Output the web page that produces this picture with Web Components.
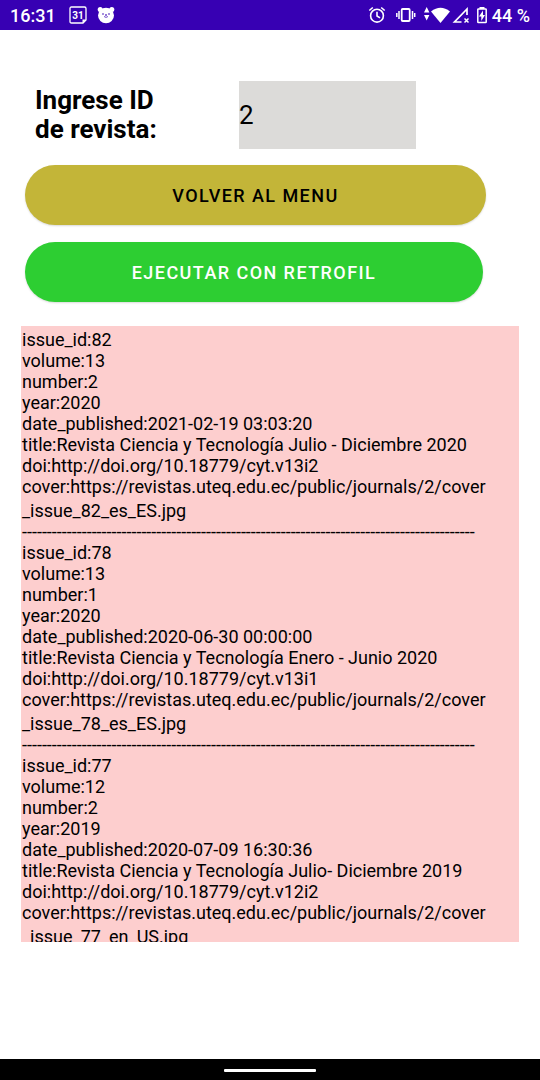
<!DOCTYPE html>
<html lang="es">
<head>
<meta charset="utf-8">
<meta name="viewport" content="width=device-width, initial-scale=1">
<title>Revistas</title>
<style>
  body { margin: 0; background: #fff; color: #000; font-family: Roboto, sans-serif; }
</style>
</head>
<body>
<revista-app></revista-app>
<script>
class BaseElement extends HTMLElement {
  constructor() {
    super();
    this.attachShadow({ mode: 'open' }).innerHTML = this.render();
  }
  render() { return ''; }
}

customElements.define('status-bar', class extends BaseElement {
  render() {
    return `
    <style>
      :host { display: flex; justify-content: space-between; align-items: center; height: 30px; padding: 0 10px;
              box-sizing: border-box; background: #3700b3; color: #fff; font-size: 18px; font-weight: 500; line-height: 21px; }
      .group { display: flex; align-items: center; }
      .left { gap: 10px; }
      .left span { margin-right: 3px; }
      .right span { margin-left: 4px; }
      .battery { margin-left: 6px; }
      svg { display: block; fill: none; stroke: #fff; }
      text { fill: #fff; stroke: none; font: 700 10px Roboto, sans-serif; }
    </style>
    <div class="group left">
      <span>16:31</span>
      <svg width="18" height="18" viewBox="0 0 18 18" aria-hidden="true">
        <path d="M2.500 1h13q1.500 0 1.500 1.500v11.500l-3 3H2.500q-1.500 0-1.500-1.500V2.500Q1 1 2.500 1z" stroke-width="1.300"/>
        <path d="M13.500 17v-3.500H17z" fill="#fff" stroke="none"/>
        <text x="9" y="12.500" text-anchor="middle">31</text>
      </svg>
      <svg width="18" height="18" viewBox="0 0 18 18" aria-hidden="true">
        <g fill="#fff" stroke="none"><circle cx="3.200" cy="3.500" r="2.500"/><circle cx="14.800" cy="3.500" r="2.500"/><ellipse cx="9" cy="9.500" rx="8" ry="7.700"/></g>
        <g fill="#3700b3" stroke="none"><circle cx="6" cy="8" r=".8"/><circle cx="12" cy="8" r=".8"/><ellipse cx="9" cy="9" rx="1" ry=".7"/></g>
        <path d="M7 10.500q2 1.800 4 0" stroke="#3700b3" stroke-width=".7"/>
      </svg>
    </div>
    <div class="group right">
      <svg width="18" height="18" viewBox="0 0 18 18" aria-hidden="true">
        <circle cx="9" cy="9.700" r="6.400" stroke-width="1.600"/>
        <path d="M9 5.800v4.200l3 1.900M1.300 4.500l3.500-3M16.700 4.500l-3.500-3" stroke-width="1.600"/>
      </svg>
      <svg width="38" height="18" viewBox="0 0 38 18" aria-hidden="true">
        <rect x="15.700" y="3" width="8" height="12" rx="1" stroke-width="1.800"/>
        <path d="M13 5v8M10.800 7v4M26.500 5v8M28.700 7v4" stroke-width="1.500"/>
      </svg>
      <svg width="46" height="18" viewBox="0 0 46 18" aria-hidden="true">
        <g fill="#fff" stroke="none">
          <path d="M0 6.500L2.700 1 5.400 6.500zM0 9l2.700 5.500L5.400 9z"/>
          <path d="M7 5.500Q16.500-2 26 5.500L16.500 17z"/>
        </g>
        <path d="M43 9V3L30.500 16h7" stroke-width="1.700"/>
        <path d="M40.500 12.500l4 4M44.500 12.500l-4 4" stroke-width="1.500"/>
      </svg>
      <svg class="battery" width="12" height="18" viewBox="0 0 12 18" aria-hidden="true">
        <path d="M3.500 1h5v2h-5z" fill="#fff" stroke="none"/>
        <rect x="1.800" y="3" width="8.400" height="13.500" rx=".6" stroke-width="1.500"/>
        <path d="M7 4.500l-4 6h2.300V15l3.700-6H7z" fill="#fff" stroke="none"/>
      </svg>
      <span>44 %</span>
    </div>`;
  }
});

customElements.define('id-field', class extends BaseElement {
  render() {
    return `
    <style>
      :host { display: flex; align-items: center; gap: 60px; padding: 0 14px; }
      label { flex: 0 0 144px; font-size: 26px; font-weight: 700; line-height: 29px; }
      input { flex: 0 1 177px; min-width: 0; height: 68px; box-sizing: border-box; border: 0; border-radius: 0; padding: 0; margin: 0;
              background: #dcdbd9; color: #000; font: 400 26px/29px Roboto, sans-serif; outline: none; }
    </style>
    <label for="id">Ingrese ID<br>de revista:</label>
    <input id="id" type="text" inputmode="numeric" value="2">`;
  }
});

customElements.define('pill-button', class extends BaseElement {
  render() {
    return `
    <style>
      :host { display: block; }
      button { display: block; width: 100%; height: 60px; border: 0; border-radius: 30px; padding: 0;
               background: var(--pill-bg); color: var(--pill-color); box-shadow: 0 1px 2px rgba(0,0,0,.15);
               font: 500 18px/21px Roboto, sans-serif; letter-spacing: 0.08em; text-transform: uppercase; }
    </style>
    <button type="button"><slot></slot></button>`;
  }
});

customElements.define('issue-entry', class extends BaseElement {
  static get observedAttributes() { return ['data-issue']; }
  attributeChangedCallback(name, previous, value) {
    const { file, ...fields } = JSON.parse(value);
    const lines = Object.entries(fields).map(([key, text]) => {
      const row = document.createElement('div');
      row.textContent = key + ':' + text;
      return row;
    });
    const last = document.createElement('div');
    last.className = 'file';
    last.textContent = file;
    this.shadowRoot.querySelector('article').replaceChildren(...lines, last);
  }
  render() {
    return `
    <style>
      :host { display: block; }
      div { white-space: nowrap; }
      .file { padding-top: 3px; }
    </style>
    <article></article>`;
  }
});

customElements.define('issue-separator', class extends BaseElement {
  render() {
    return `<style>:host { display: block; white-space: nowrap; }</style>${'-'.repeat(91)}`;
  }
});

customElements.define('issue-list', class extends BaseElement {
  render() {
    return `
    <style>
      :host { display: block; box-sizing: border-box; padding: 3px 1px 0; overflow: auto; scrollbar-width: none;
              background: #fdcece; font-size: 18px; line-height: 21px; }
    </style>
    <slot></slot>`;
  }
});

customElements.define('nav-bar', class extends BaseElement {
  render() {
    return `
    <style>
      :host { display: flex; align-items: center; justify-content: center; height: 21px; background: #000; }
      i { width: 92px; height: 3px; margin-top: 2px; border-radius: 1px; background: #fff; }
    </style>
    <i></i>`;
  }
});

customElements.define('revista-app', class extends BaseElement {
  render() {
    return `
    <style>
      :host { display: flex; flex-direction: column; height: 100vh; }
      status-bar, nav-bar { flex: none; }
      main { flex: 1; min-height: 0; display: flex; flex-direction: column; box-sizing: border-box; padding: 51px 21px 117px; }
      id-field, pill-button { flex: none; }
      .menu { --pill-bg: #c3b538; --pill-color: #000; margin: 16px 33px 0 4px; }
      .run { --pill-bg: #2dce32; --pill-color: #fff; margin: 17px 36px 0 4px; }
      issue-list { flex: 1; min-height: 0; margin-top: 24px; }
    </style>
    <status-bar></status-bar>
    <main>
      <id-field></id-field>
      <pill-button class="menu">Volver al menu</pill-button>
      <pill-button class="run">Ejecutar con Retrofil</pill-button>
      <issue-list></issue-list>
    </main>
    <nav-bar></nav-bar>`;
  }
  connectedCallback() {
    const cover = 'https://revistas.uteq.edu.ec/public/journals/2/cover';
    const issues = [
      { issue_id: '82', volume: '13', number: '2', year: '2020', date_published: '2021-02-19 03:03:20',
        title: 'Revista Ciencia y Tecnología Julio - Diciembre 2020', doi: 'http://doi.org/10.18779/cyt.v13i2', cover, file: '_issue_82_es_ES.jpg' },
      { issue_id: '78', volume: '13', number: '1', year: '2020', date_published: '2020-06-30 00:00:00',
        title: 'Revista Ciencia y Tecnología Enero - Junio 2020', doi: 'http://doi.org/10.18779/cyt.v13i1', cover, file: '_issue_78_es_ES.jpg' },
      { issue_id: '77', volume: '12', number: '2', year: '2019', date_published: '2020-07-09 16:30:36',
        title: 'Revista Ciencia y Tecnología Julio- Diciembre 2019', doi: 'http://doi.org/10.18779/cyt.v12i2', cover, file: '_issue_77_en_US.jpg' }
    ];
    this.shadowRoot.querySelector('issue-list').replaceChildren(...issues.flatMap((issue, index) => {
      const entry = document.createElement('issue-entry');
      entry.setAttribute('data-issue', JSON.stringify(issue));
      return index ? [document.createElement('issue-separator'), entry] : [entry];
    }));
  }
});
</script>
</body>
</html>
